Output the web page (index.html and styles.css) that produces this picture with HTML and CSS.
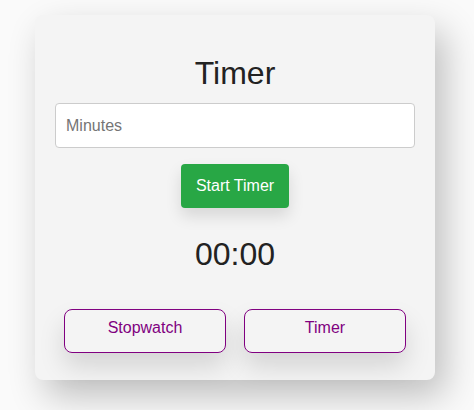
FILE: index.html
```html
<!DOCTYPE html>
<html>
<head>
<meta charset="utf-8">
<link rel="stylesheet" href="styles.css">
</head>
<body>
<div class="card">
  <h1 class="title">Timer</h1>
  <input class="minutes" type="number" placeholder="Minutes">
  <div class="start-row"><button class="start">Start Timer</button></div>
  <div class="display">00:00</div>
  <div class="modes">
    <button class="mode">Stopwatch</button>
    <button class="mode">Timer</button>
  </div>
</div>
</body>
</html>
```
FILE: styles.css
```css
html, body {
  margin: 0;
  padding: 0;
}
body {
  background: #fafafa;
  font-family: "Liberation Sans", Arial, sans-serif;
  color: #333;
  height: 410px;
  overflow: hidden;
}
.card {
  width: 400px;
  height: 365px;
  box-sizing: border-box;
  margin: 15px 0 0 35px;
  padding: 20px;
  background: #f4f4f4;
  border-radius: 8px;
  box-shadow: 10px 16px 36px rgba(0,0,0,0.24);
  text-align: center;
}
.title {
  font-size: 32px;
  font-weight: normal;
  line-height: 37px;
  margin: 20px 0 11px;
  color: #222;
}
.minutes {
  display: block;
  width: 100%;
  height: 45px;
  box-sizing: border-box;
  padding: 10px;
  border: 1px solid #ccc;
  border-radius: 4px;
  background: #fff;
  font-family: "Liberation Sans", Arial, sans-serif;
  font-size: 16px;
  color: #333;
}
.minutes::placeholder {
  color: #757575;
}
.start-row {
  margin-top: 16px;
}
.start {
  height: 44px;
  padding: 0 15px;
  border: none;
  border-radius: 4px;
  background: #28a745;
  color: #fff;
  font-family: "Liberation Sans", Arial, sans-serif;
  font-size: 16px;
  box-shadow: 0 8px 16px rgba(0,0,0,0.12);
}
.display {
  font-size: 32px;
  line-height: 37px;
  margin-top: 28px;
  color: #222;
}
.modes {
  display: flex;
  justify-content: space-around;
  margin-top: 36px;
}
.mode {
  width: 45%;
  height: 44px;
  border: 1px solid #800080;
  border-radius: 8px;
  background: transparent;
  color: #800080;
  font-family: "Liberation Sans", Arial, sans-serif;
  font-size: 16px;
  padding: 0 0 6px;
  box-shadow: 0 14px 26px rgba(0,0,0,0.13);
}
```
